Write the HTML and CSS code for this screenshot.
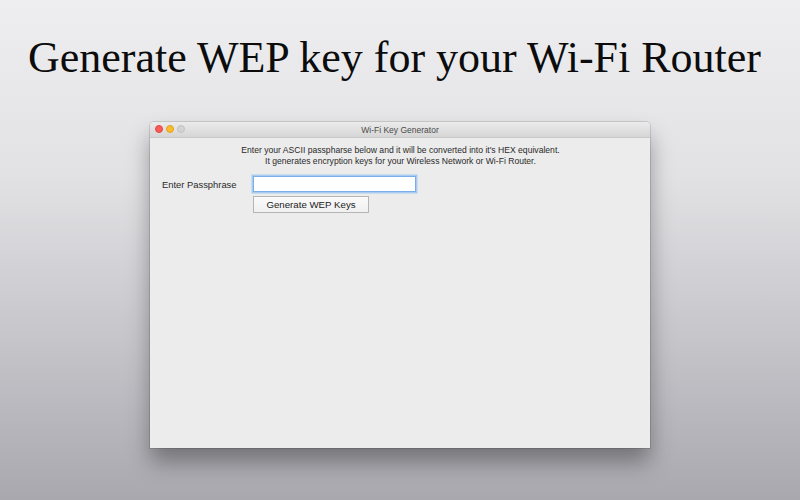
FILE: index.html
```html
<!DOCTYPE html>
<html>
<head>
<meta charset="utf-8">
<link rel="stylesheet" href="styles.css">
</head>
<body>
<div class="stage">
  <h1 class="headline">Generate WEP key for your Wi-Fi Router</h1>
  <div class="window">
    <div class="titlebar">
      <div class="lights">
        <span class="light red"></span>
        <span class="light yellow"></span>
        <span class="light gray"></span>
      </div>
      <div class="wtitle">Wi-Fi Key Generator</div>
    </div>
    <div class="content">
      <p class="desc">Enter your ASCII passpharse below and it will be converted into it's HEX equivalent.<br>It generates encryption keys for your Wireless Network or Wi-Fi Router.</p>
      <div class="form">
        <label class="label">Enter Passphrase</label>
        <div class="fields">
          <div class="input"></div>
          <div class="button">Generate WEP Keys</div>
        </div>
      </div>
    </div>
  </div>
</div>
</body>
</html>
```
FILE: styles.css
```css
html, body {
  margin: 0;
  padding: 0;
}
body {
  width: 800px;
  height: 500px;
  overflow: hidden;
  background: linear-gradient(to bottom, #eeeef0 0%, #e2e2e5 35%, #c4c3c8 70%, #a9a8ae 100%);
}
.stage {
  display: flex;
  flex-direction: column;
  align-items: center;
}
.headline {
  margin: 33px 0 0 0;
  height: 89px;
  font-family: "Liberation Serif", serif;
  font-weight: normal;
  font-size: 44px;
  line-height: 50px;
  color: #0c0c0c;
  white-space: nowrap;
  padding-right: 11px;
}
.window {
  width: 500px;
  height: 326px;
  background: #ececec;
  border-radius: 4px 4px 0 0;
  box-shadow: 0 14px 22px rgba(0,0,0,0.35), 0 0 0 1px rgba(0,0,0,0.12);
  display: flex;
  flex-direction: column;
  overflow: hidden;
}
.titlebar {
  height: 15px;
  background: linear-gradient(to bottom, #ebebeb, #d6d6d6);
  border-bottom: 1px solid #c8c8c8;
  position: relative;
  display: flex;
  align-items: center;
  justify-content: center;
}
.lights {
  position: absolute;
  left: 5px;
  top: 3px;
  display: flex;
  gap: 3px;
}
.light {
  width: 8px;
  height: 8px;
  border-radius: 50%;
  box-sizing: border-box;
}
.red { background: #fc5b57; border: 1px solid #e1463f; }
.yellow { background: #fdbb2e; border: 1px solid #e0a125; }
.gray { background: #d3d3d3; border: 1px solid #c2c2c2; }
.wtitle {
  font-family: "Liberation Sans", Arial, sans-serif;
  font-size: 8.5px;
  color: #4a4a4a;
}
.content {
  flex: 1;
  padding: 7px 12px 0 12px;
  font-family: "Liberation Sans", Arial, sans-serif;
  color: #2a2a2a;
}
.desc {
  margin: 0;
  text-align: center;
  font-size: 8.6px;
  line-height: 11px;
  padding-left: 1px;
}
.form {
  display: flex;
  margin-top: 9px;
}
.label {
  font-size: 9.4px;
  width: 91px;
  padding-top: 3px;
  padding-left: 0px;
}
.fields {
  display: flex;
  flex-direction: column;
  gap: 4px;
}
.input {
  width: 161px;
  height: 14px;
  background: #fff;
  border: 1px solid #7aaee8;
  box-shadow: 0 0 0 1.5px #a9cbf1;
}
.button {
  width: 116px;
  height: 17px;
  box-sizing: border-box;
  background: linear-gradient(to bottom, #fafafa, #f0f0f0);
  border: 1px solid #b5b5b5;
  font-size: 9.7px;
  text-align: center;
  line-height: 15px;
  color: #222;
}
```
